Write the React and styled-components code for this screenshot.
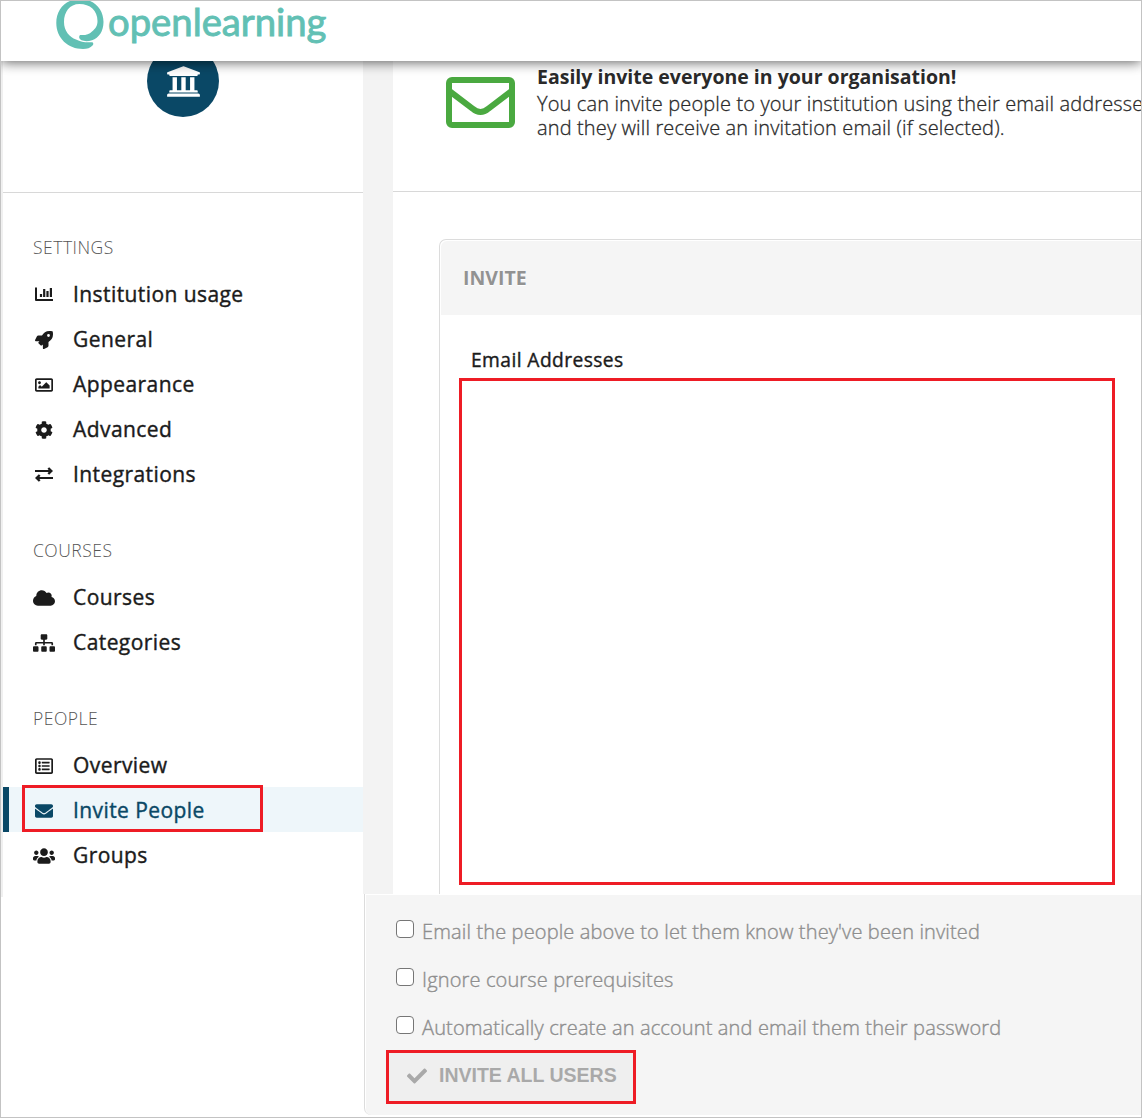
import React from "react";
import styled, { createGlobalStyle, css } from "styled-components";
import {
  FaRocket, FaRegImage, FaCog, FaCloud, FaSitemap,
  FaRegListAlt, FaEnvelope, FaUsers, FaCheck, FaUniversity,
} from "react-icons/fa";

const Global = createGlobalStyle`
  *, *::before, *::after { box-sizing: border-box; }
  body { margin: 0; background: #fff; font-family: "Open Sans", "Noto Sans", sans-serif; }
`;

const Page = styled.div`
  width: 1142px;
  height: 1118px;
  border: 1px solid #c3c3c3;
  overflow: hidden;
  display: flex;
  flex-direction: column;
  background: #fff;
`;

const Header = styled.header`
  position: relative;
  z-index: 2;
  flex: none;
  height: 60px;
  padding-left: 49px;
  background: #fff;
  box-shadow: 0 1px 12px rgba(0, 0, 0, 0.65);
  clip-path: inset(0 0 -20px 0);
`;

const Logo = styled.svg`
  display: block;
  width: 290px;
  height: 56px;
  overflow: visible;
`;

const Wordmark = styled.text`
  font-family: Lato, sans-serif;
  font-size: 38.5px;
  font-weight: 400;
  stroke: #62c0b4;
  stroke-width: 0.9px;
`;

const Body = styled.div`
  flex: 1;
  min-height: 0;
  display: flex;
`;

const Sidebar = styled.nav`
  flex: none;
  width: 362px;
  height: 836px;
  border-left: 2px solid #f0f0f0;
`;

const Profile = styled.div`
  height: 132px;
  overflow: hidden;
  border-bottom: 1px solid #d8d8d8;
`;

const Avatar = styled.div`
  width: 72px;
  height: 72px;
  margin: -16px auto 0;
  border-radius: 50%;
  background: #0a4866;
  color: #fff;
  display: grid;
  place-items: center;
`;

const Section = styled.section`
  height: ${(p) => p.$rows * 45 + 78}px;
`;

const SectionTitle = styled.h2`
  margin: 0;
  padding: 42px 0 0 30px;
  height: 78px;
  line-height: 25px;
  font-size: 17.5px;
  letter-spacing: 0.5px;
  font-weight: 300;
  color: #555;
`;

const NavItem = styled.a`
  position: relative;
  height: 45px;
  padding-left: 30px;
  display: flex;
  align-items: center;
  gap: 18px;
  font-size: 21px;
  font-weight: 500;
  letter-spacing: 0.42px;
  -webkit-text-stroke: 0.4px currentColor;
  color: #1b1b1b;
  ${(p) => p.$active && css`
    color: #0a4866;
    background: #eef6fa;
    box-shadow: inset 6px 0 #0a4866;
  `}
`;

const NavIcon = styled.span`
  width: 22px;
  display: flex;
  justify-content: center;
  padding-top: 2px;
  svg { display: block; flex: none; }
`;

const Callout = styled.span`
  position: absolute;
  left: 19px;
  top: -2px;
  width: 241px;
  height: 47px;
  border: 3px solid #ee1c25;
`;

const Content = styled.div`
  flex: 1;
  min-width: 0;
  display: flex;
  flex-direction: column;
`;

const Upper = styled.div`
  flex: none;
  height: 833px;
  padding-left: 30px;
  background: linear-gradient(to right, #f3f3f3 30px, #fff 30px);
`;

const Intro = styled.section`
  height: 131px;
  padding-left: 53px;
  border-bottom: 1px solid #d8d8d8;
  display: flex;
  gap: 22px;
  color: #2a2a2a;
  white-space: nowrap;
`;

const IntroIcon = styled.div`
  flex: none;
  width: 69px;
  padding-top: 16px;
  color: #4aa940;
  svg { display: block; }
`;

const IntroText = styled.div`
  padding-top: 3px;
`;

const IntroTitle = styled.h1`
  margin: 0 0 3px;
  font-size: 19.5px;
  line-height: 25px;
  font-weight: 700;
`;

const IntroLine = styled.p`
  margin: 0;
  height: 24px;
  font-size: 20px;
  line-height: 24px;
  font-weight: 300;
  letter-spacing: 0.13px;
  -webkit-text-stroke: 0.3px currentColor;
`;

const InvitePanel = styled.section`
  height: 655px;
  margin: 47px 0 0 46px;
  border: solid #dcdcdc;
  border-width: 1px 0 0 1px;
  border-top-left-radius: 7px;
`;

const PanelTitle = styled.h2`
  margin: 1px 0 0 1px;
  height: 74px;
  padding-left: 22px;
  border-top-left-radius: 6px;
  background: #f5f5f5;
  font-size: 19.5px;
  line-height: 73px;
  font-weight: 700;
  color: #929292;
  text-shadow: 0 1px 0 #fff;
`;

const Field = styled.label`
  display: block;
  padding: 30px 0 0 19px;
`;

const FieldLabel = styled.span`
  display: block;
  height: 33px;
  padding-left: 12px;
  font-size: 19.2px;
  line-height: 30px;
  font-weight: 500;
  letter-spacing: 0.43px;
  -webkit-text-stroke: 0.4px currentColor;
  color: #1b1b1b;
`;

const EmailBox = styled.textarea`
  display: block;
  width: 656px;
  height: 507px;
  border: 3px solid #ee1c25;
  background: #fff;
  resize: none;
  outline: none;
`;

const Actions = styled.form`
  height: 221px;
  margin-left: 1px;
  padding: 13px 0 0 21px;
  border-left: 1px solid #dcdcdc;
  border-bottom-left-radius: 7px;
  background: #f5f5f5;
  box-shadow: inset 1px 1px 0 #fff;
`;

const Option = styled.label`
  height: 48px;
  padding-left: 10px;
  display: flex;
  align-items: center;
  gap: 8px;
  font-size: 20px;
  font-weight: 300;
  letter-spacing: 0.14px;
  -webkit-text-stroke: 0.4px currentColor;
  color: #8e8e8e;
  white-space: nowrap;
  text-shadow: 0 1px 0 #fff;
`;

const Check = styled.input`
  appearance: none;
  width: 18px;
  height: 18px;
  margin: 0 0 4px;
  border: 1.5px solid #767676;
  border-radius: 4px;
  background: #fff;
`;

const InviteButton = styled.button`
  width: 250px;
  height: 54px;
  margin: -1px 0 0;
  padding: 0 0 3px 18px;
  border: 3px solid #ee1c25;
  background: #efefef;
  display: flex;
  align-items: center;
  gap: 12px;
  font: bold 19.5px "Liberation Sans", Arial, sans-serif;
  color: #a9a9a9;
  white-space: nowrap;
`;

const Exchange = ({ size }) => (
  <svg width={size} height={size} viewBox="0 0 18 18" fill="none" stroke="currentColor" strokeWidth="2">
    <path d="M0 5H16.5M18 12H1.5" />
    <path d="M13.3 2L16.3 5L13.3 8M4.7 9L1.700 12L4.700 15" strokeWidth="2.4" />
  </svg>
);

const BarChart = ({ size }) => (
  <svg width={size} height={size} viewBox="0 0 18 18" fill="none" stroke="currentColor" strokeWidth="2">
    <path d="M1 1.5V14H18" strokeLinejoin="round" />
    <path d="M6 8V11M9.200 3V11M12.500 5V11M15.900 2V11" strokeWidth="2.2" />
  </svg>
);

const BigEnvelope = () => (
  <svg width="69" height="51" viewBox="0 0 69 51" fill="none" stroke="currentColor" strokeWidth="6">
    <rect x="3" y="3" width="63" height="45" rx="3" />
    <path d="M4 14.5L26.5 31.5Q34.5 38.500 42.500 31.500L65 14.500" />
  </svg>
);

const sections = [
  { title: "SETTINGS", items: [
    ["Institution usage", BarChart, 18], ["General", FaRocket, 18],
    ["Appearance", FaRegImage, 18], ["Advanced", FaCog, 18], ["Integrations", Exchange, 18],
  ] },
  { title: "COURSES", items: [["Courses", FaCloud, 22], ["Categories", FaSitemap, 22]] },
  { title: "PEOPLE", items: [
    ["Overview", FaRegListAlt, 18], ["Invite People", FaEnvelope, 18, true], ["Groups", FaUsers, 22],
  ] },
];

const options = [
  "Email the people above to let them know they've been invited",
  "Ignore course prerequisites",
  "Automatically create an account and email them their password",
];

export default function App() {
  return (
    <>
      <Global />
      <Page>
        <Header>
          <Logo viewBox="50 1 290 56" fill="#62c0b4">
            <path d="M80 -1C94 -1 103.500 9 103.500 22C103.500 31 99 38 92 40.300C88 41.500 84 41.300 81.500 40.300C79 39 78.500 36.500 80 35C85 35.500 89 34.500 92 31.500C95.500 28.500 97.500 26 97.500 21C97.500 10.500 90 4 79.500 4C69.500 4 64 12 64 22C64 31 69.500 37 76 39.500C81 41.800 86 42.800 91.500 42.200C93.500 42 93.800 44 92.500 45.500C90.500 48 87 49 83 49C68 49 56.300 38 56.300 23C56.300 9 66 -1 80 -1Z" />
            <Wordmark x="108" y="35.500" textLength="218.500" lengthAdjust="spacingAndGlyphs">openlearning</Wordmark>
          </Logo>
        </Header>
        <Body>
          <Sidebar>
            <Profile><Avatar><FaUniversity size={35} /></Avatar></Profile>
            {sections.map(({ title, items }) => (
              <Section key={title} $rows={items.length}>
                <SectionTitle>{title}</SectionTitle>
                {items.map(([label, Icon, size, active]) => (
                  <NavItem key={label} $active={active}>
                    <NavIcon><Icon size={size} /></NavIcon>
                    {label}
                    {active && <Callout />}
                  </NavItem>
                ))}
              </Section>
            ))}
          </Sidebar>
          <Content>
            <Upper>
              <Intro>
                <IntroIcon><BigEnvelope /></IntroIcon>
                <IntroText>
                  <IntroTitle>Easily invite everyone in your organisation!</IntroTitle>
                  <IntroLine>You can invite people to your institution using their email addresse</IntroLine>
                  <IntroLine>and they will receive an invitation email (if selected).</IntroLine>
                </IntroText>
              </Intro>
              <InvitePanel>
                <PanelTitle>INVITE</PanelTitle>
                <Field>
                  <FieldLabel>Email Addresses</FieldLabel>
                  <EmailBox />
                </Field>
              </InvitePanel>
            </Upper>
            <Actions>
              {options.map((text) => (
                <Option key={text}><Check type="checkbox" />{text}</Option>
              ))}
              <InviteButton type="button"><FaCheck size={20} />INVITE ALL USERS</InviteButton>
            </Actions>
          </Content>
        </Body>
      </Page>
    </>
  );
}
